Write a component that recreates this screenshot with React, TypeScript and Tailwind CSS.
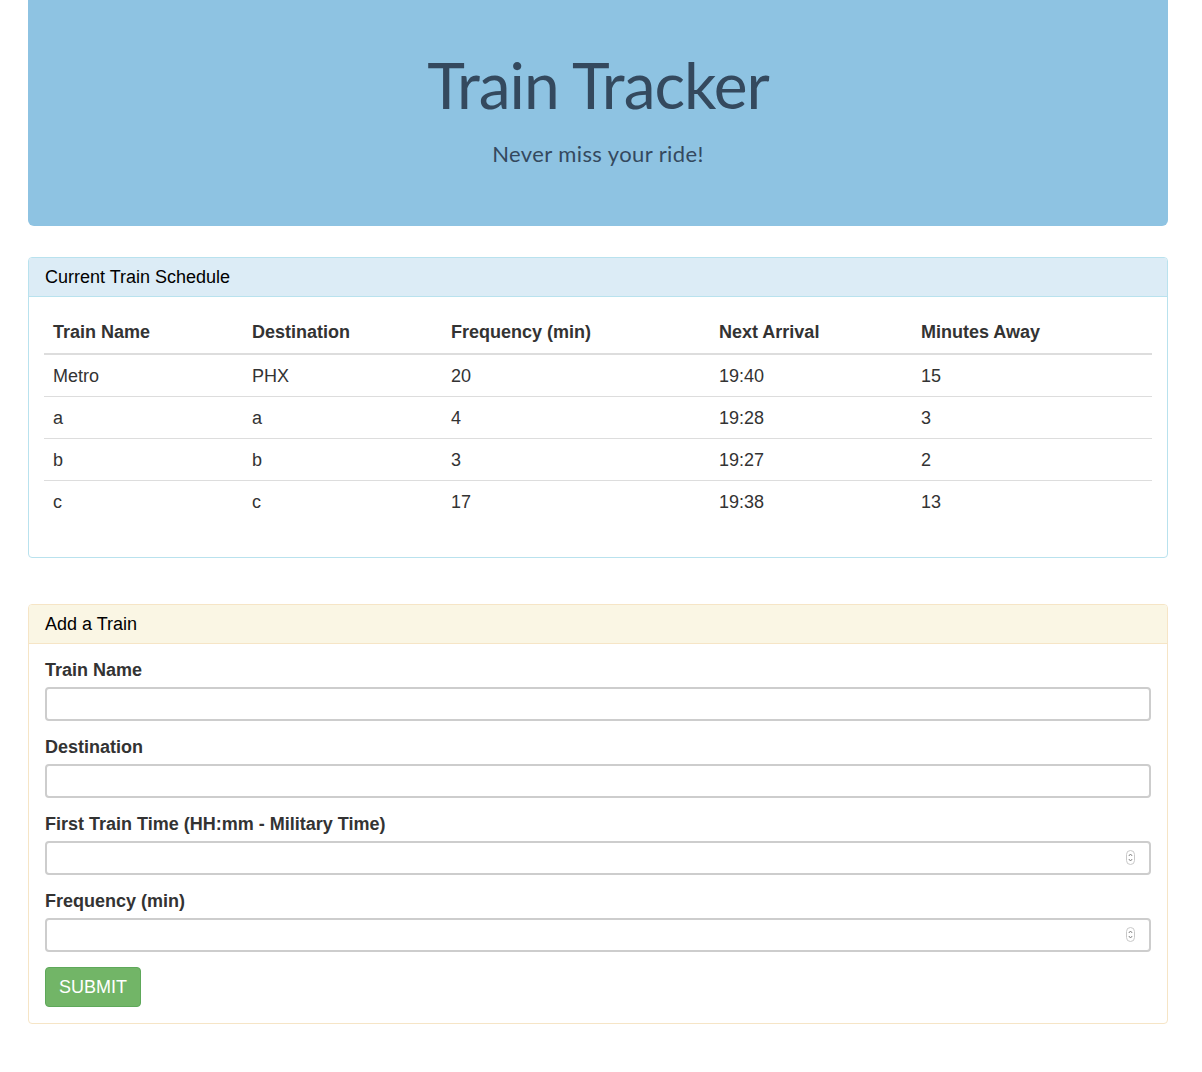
import React from "react";

const rows = [
  ["Metro", "PHX", "20", "19:40", "15"],
  ["a", "a", "4", "19:28", "3"],
  ["b", "b", "3", "19:27", "2"],
  ["c", "c", "17", "19:38", "13"],
];

function Spinner() {
  return (
    <svg
      className="absolute right-[16px] top-[9px]"
      width="9"
      height="15"
      viewBox="0 0 9 15"
    >
      <rect x="0.5" y="0.5" width="8" height="14" rx="4" fill="#fff" stroke="#c8c8c8" />
      <path d="M2.8 6 L4.5 4 L6.2 6" fill="none" stroke="#777" strokeWidth="0.9" />
      <path d="M2.8 9 L4.5 11 L6.2 9" fill="none" stroke="#777" strokeWidth="0.9" />
    </svg>
  );
}

function Field({ label, spinner }: { label: string; spinner?: boolean }) {
  return (
    <div className="flex flex-col">
      <label className="mb-[5px] text-[18px] font-bold leading-[24px] text-[#333]">{label}</label>
      <div className="relative">
        <div className="h-[34px] w-full rounded-[4px] border-2 border-[#cdcdcd] bg-white" />
        {spinner && <Spinner />}
      </div>
    </div>
  );
}

export default function App() {
  return (
    <div
      className="min-h-[1072px] w-[1202px] bg-white"
      style={{ fontFamily: '"Liberation Sans", Arial, Helvetica, sans-serif' }}
    >
      <div className="ml-[28px] w-[1140px]">
        {/* Jumbotron */}
        <div className="flex h-[226px] flex-col items-center rounded-b-[6px] bg-[#8ec3e2] pt-[50px] text-[#34495e]">
          <h1
            className="text-[64px] leading-[69px] tracking-[-1px]"
            style={{ fontFamily: 'Lato, "Gill Sans", sans-serif' }}
          >
            Train Tracker
          </h1>
          <p
            className="mt-[20px] text-[22px] leading-[30px] tracking-[0.4px]"
            style={{ fontFamily: 'Lato, "Gill Sans", sans-serif' }}
          >
            Never miss your ride!
          </p>
        </div>

        {/* Schedule panel */}
        <div className="mt-[31px] rounded-[4px] border border-[#b9e2ee] bg-white">
          <div className="rounded-t-[3px] border-b border-[#b9e2ee] bg-[#dcecf6] px-[16px] py-[9px] text-[18px] leading-[20px] text-black">
            Current Train Schedule
          </div>
          <div className="p-[15px]">
            <table className="mb-[20px] w-full table-fixed border-collapse text-[18px] leading-[25px] text-[#333]">
              <colgroup>
                <col className="w-[199px]" />
                <col className="w-[199px]" />
                <col className="w-[268px]" />
                <col className="w-[202px]" />
                <col className="w-[240px]" />
              </colgroup>
              <thead>
                <tr className="border-b-2 border-[#ddd]">
                  {["Train Name", "Destination", "Frequency (min)", "Next Arrival", "Minutes Away"].map((h) => (
                    <th key={h} className="p-[8px] pl-[9px] text-left font-bold">
                      {h}
                    </th>
                  ))}
                </tr>
              </thead>
              <tbody>
                {rows.map((r, i) => (
                  <tr key={i} className={i === 0 ? "" : "border-t border-[#ddd]"}>
                    {r.map((c, j) => (
                      <td key={j} className="p-[8px] pl-[9px] pt-[9px] pb-[7px]">
                        {c}
                      </td>
                    ))}
                  </tr>
                ))}
              </tbody>
            </table>
          </div>
        </div>

        {/* Add a Train panel */}
        <div className="mt-[46px] rounded-[4px] border border-[#f6e5c6] bg-white">
          <div className="rounded-t-[3px] border-b border-[#f6e5c6] bg-[#faf6e4] px-[16px] py-[9px] text-[18px] leading-[20px] text-black">
            Add a Train
          </div>
          <div className="flex flex-col gap-[14px] p-[16px] pb-[16px] pt-[14px]">
            <Field label="Train Name" />
            <Field label="Destination" />
            <Field label="First Train Time (HH:mm - Military Time)" spinner />
            <Field label="Frequency (min)" spinner />
            <div className="pt-[1px]">
              <button className="h-[40px] rounded-[4px] border border-[#5ea85a] bg-[#72b567] px-[13px] text-[18px] leading-[20px] text-white">
                SUBMIT
              </button>
            </div>
          </div>
        </div>
      </div>
    </div>
  );
}
